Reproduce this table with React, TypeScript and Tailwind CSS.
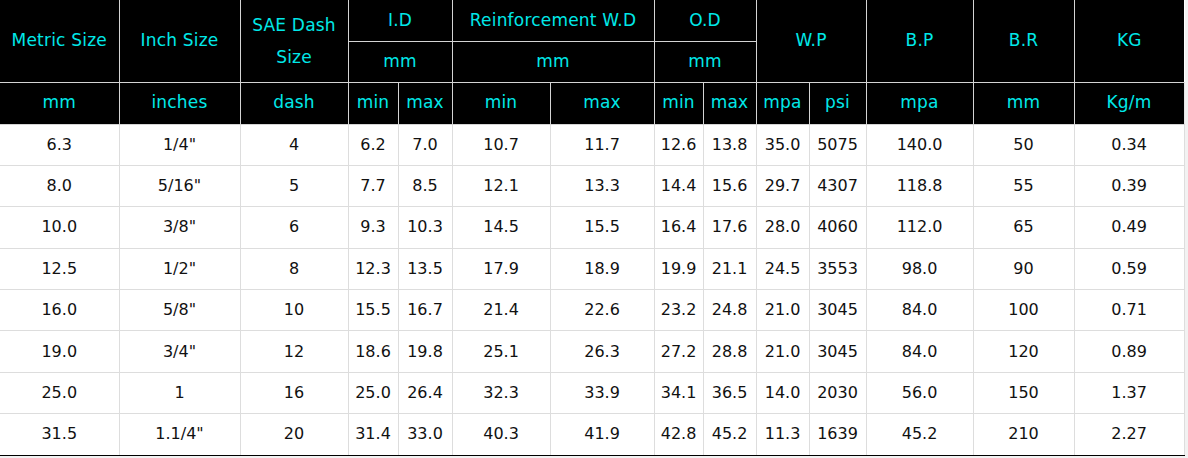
const cols = [119, 121, 108, 50, 54, 98, 104, 49, 53, 53, 57, 107, 101, 110];

const rows = [
  ["6.3", '1/4"', "4", "6.2", "7.0", "10.7", "11.7", "12.6", "13.8", "35.0", "5075", "140.0", "50", "0.34"],
  ["8.0", '5/16"', "5", "7.7", "8.5", "12.1", "13.3", "14.4", "15.6", "29.7", "4307", "118.8", "55", "0.39"],
  ["10.0", '3/8"', "6", "9.3", "10.3", "14.5", "15.5", "16.4", "17.6", "28.0", "4060", "112.0", "65", "0.49"],
  ["12.5", '1/2"', "8", "12.3", "13.5", "17.9", "18.9", "19.9", "21.1", "24.5", "3553", "98.0", "90", "0.59"],
  ["16.0", '5/8"', "10", "15.5", "16.7", "21.4", "22.6", "23.2", "24.8", "21.0", "3045", "84.0", "100", "0.71"],
  ["19.0", '3/4"', "12", "18.6", "19.8", "25.1", "26.3", "27.2", "28.8", "21.0", "3045", "84.0", "120", "0.89"],
  ["25.0", "1", "16", "25.0", "26.4", "32.3", "33.9", "34.1", "36.5", "14.0", "2030", "56.0", "150", "1.37"],
  ["31.5", '1.1/4"', "20", "31.4", "33.0", "40.3", "41.9", "42.8", "45.2", "11.3", "1639", "45.2", "210", "2.27"],
];

const units = ["mm", "inches", "dash", "min", "max", "min", "max", "min", "max", "mpa", "psi", "mpa", "mm", "Kg/m"];

const th = "border border-[#d4d4d4] bg-black px-0 text-center text-[17px] font-normal tracking-[0.2px] text-[#00e8e8]";

export default function App() {
  return (
    <div className="min-h-screen bg-[#f2f2f2]" style={{ fontFamily: '"DejaVu Sans", "Open Sans", sans-serif' }}>
      <table className="table-fixed border-collapse bg-white text-[16px] leading-tight" style={{ width: 1184 }}>
        <colgroup>
          {cols.map((w, i) => (
            <col key={i} style={{ width: w }} />
          ))}
        </colgroup>
        <thead>
          <tr className="h-[41px]">
            <th rowSpan={2} className={`${th} border-t-0 border-l-0`}>Metric Size</th>
            <th rowSpan={2} className={`${th} border-t-0`}>Inch Size</th>
            <th rowSpan={2} className={`${th} border-t-0 leading-[32px]`}>
              SAE Dash
              <br />
              Size
            </th>
            <th colSpan={2} className={`${th} border-t-0`}>I.D</th>
            <th colSpan={2} className={`${th} border-t-0`}>Reinforcement W.D</th>
            <th colSpan={2} className={`${th} border-t-0`}>O.D</th>
            <th colSpan={2} rowSpan={2} className={`${th} border-t-0`}>W.P</th>
            <th rowSpan={2} className={`${th} border-t-0`}>B.P</th>
            <th rowSpan={2} className={`${th} border-t-0`}>B.R</th>
            <th rowSpan={2} className={`${th} border-t-0 border-r-0`}>KG</th>
          </tr>
          <tr className="h-[41px]">
            <th colSpan={2} className={th}>mm</th>
            <th colSpan={2} className={th}>mm</th>
            <th colSpan={2} className={th}>mm</th>
          </tr>
          <tr className="h-[42px]">
            {units.map((u, i) => (
              <th
                key={i}
                className={`${th} ${i === 0 ? "border-l-0" : ""} ${i === units.length - 1 ? "border-r-[#e5e5e5]" : ""}`}
              >
                {u}
              </th>
            ))}
          </tr>
        </thead>
        <tbody>
          {rows.map((r, ri) => (
            <tr key={ri} className="h-[41.4px]">
              {r.map((c, ci) => (
                <td
                  key={ci}
                  className={`border border-[#dddddd] px-0 text-center text-[#111] ${ci === 0 ? "border-l-0" : ""} ${
                    ri === rows.length - 1 ? "border-b-black" : ""
                  }`}
                >
                  {c}
                </td>
              ))}
            </tr>
          ))}
        </tbody>
      </table>
    </div>
  );
}
